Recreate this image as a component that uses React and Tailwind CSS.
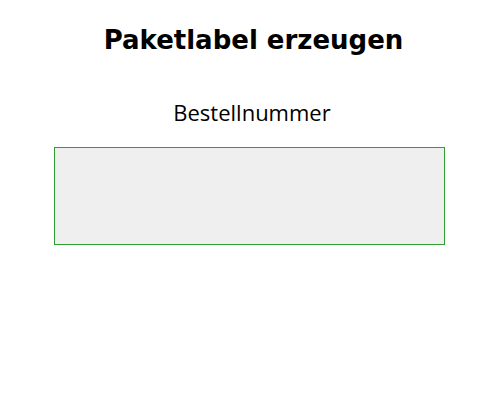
export default function App() {
  return (
    <div className="w-[495px] h-[400px] bg-white flex flex-col items-center">
      <h1 className="mt-[22px] h-[36px] leading-[36px] text-[26px] font-bold text-black whitespace-nowrap pl-[12px]" style={{ fontFamily: '"DejaVu Sans", sans-serif' }}>
        Paketlabel erzeugen
      </h1>
      <div className="mt-[39px] h-[30px] leading-[30px] text-[22px] text-black pl-[9px]" style={{ fontFamily: '"Open Sans", sans-serif' }}>
        Bestellnummer
      </div>
      <div className="mt-[20px] ml-[4px] w-[391px] h-[98px] bg-[#efefef] border border-[#2f9e2f]"></div>
    </div>
  );
}
